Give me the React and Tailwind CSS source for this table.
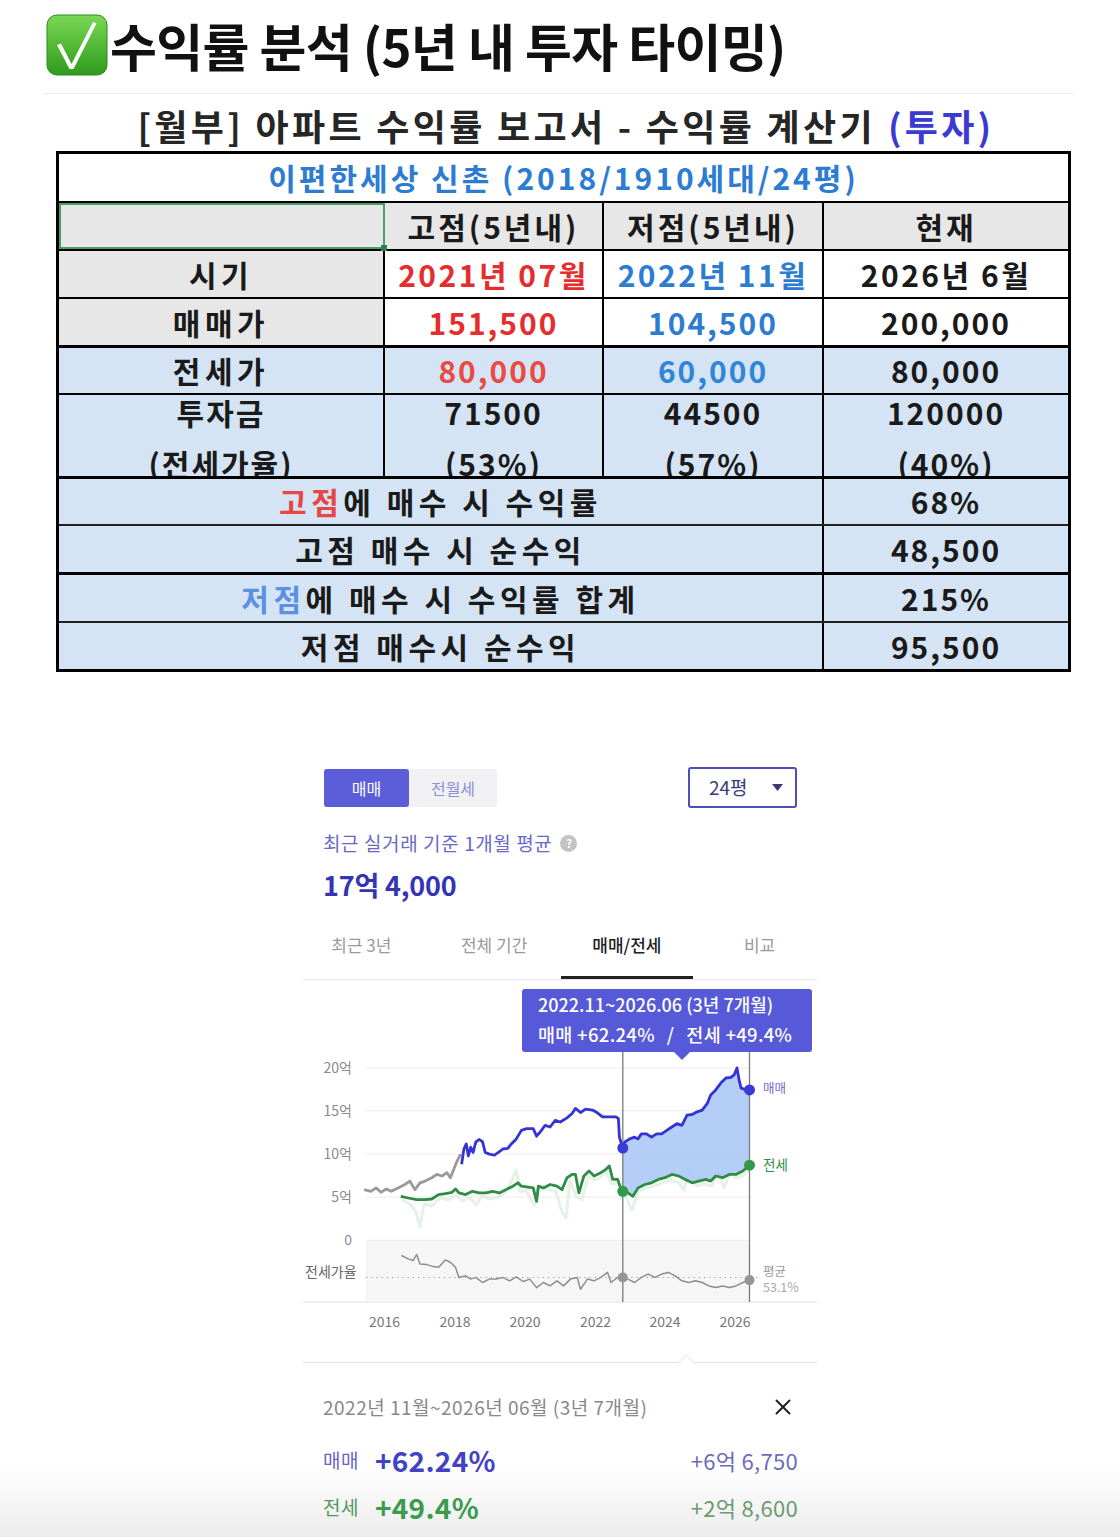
import React from 'react';
import { X } from 'lucide-react';

const GRAY_LINE =
  '364.2,1189.6 371,1191.3 376,1187.9 381.1,1192.3 386.2,1188.9 391.3,1191.3 398,1187.9 404.8,1184.5 409.9,1181.1 414.9,1189.6 420,1182.8 425.1,1181.1 431.8,1177.7 436.9,1174.4 442,1176 447,1172.7 450.4,1177.7 453.8,1169.3 457.2,1160.8 460.6,1154.1';

const BLUE_BEFORE =
  '461.6,1164.2 463.9,1149 466.3,1143.9 468.3,1155.8 470.7,1147.3 473.1,1152.4 475.8,1142.2 479.1,1139.5 482.5,1141.6 485.2,1152.4 489.3,1154.1 494.4,1155.1 499.4,1151.7 502.8,1149 507.9,1148.3 511.3,1143.9 516.3,1138.9 521.4,1130.4 526.5,1128.7 533.2,1128.7 536.6,1136.2 540.7,1131.4 545.1,1125.3 550.1,1127 555.2,1120.3 560.3,1122 567,1117.9 572.1,1113.5 575.5,1108.4 580.5,1112.5 585.6,1109.1 592.4,1110.1 597.4,1112.8 602.5,1116.9 616,1116.9 618.4,1118.6 619.4,1137.2 622.8,1148';

const BLUE_AFTER =
  '622.8,1148 624.5,1142.2 629.6,1138.9 634.6,1137.2 638,1138.9 641.4,1133.8 646.5,1133.8 651.5,1137.2 656.6,1133.8 661.7,1133.8 666.7,1130.4 671.8,1127 676.9,1123.7 681.9,1125.3 687,1115.2 692.1,1114.5 697.2,1111.8 702.2,1110.1 707.3,1103.4 710.7,1094.9 715.7,1089.9 720.8,1083.1 725.9,1078 731,1077.3 734.3,1074.6 737,1067.9 739.4,1081.4 741.1,1088.2 746.2,1089.9 749.5,1089.9';

const GREEN_BEFORE =
  '400.7,1196.3 408.2,1198 416.6,1199.7 425.1,1199.7 431.8,1199 438.6,1194.6 445.3,1193.6 452.1,1192.3 455.5,1188.9 458.9,1192.9 465.6,1194.6 472.4,1191.3 479.1,1192.9 485.9,1192.9 492.7,1191.3 499.4,1192.9 506.2,1189.6 512.9,1186.2 518,1182.8 521.4,1186.2 526.5,1186.9 533.2,1187.9 536.6,1201.4 538.3,1186.2 543.4,1187.9 550.1,1184.5 556.9,1186.2 562,1189.6 567,1177.7 572.1,1174.4 575.5,1174.4 578.9,1192.9 583.9,1176 589,1171 594.1,1176 600.8,1172.7 605.9,1169.3 609.3,1165.9 612.7,1179.4 617.7,1179.4 621.1,1189.6 622.8,1191.3';

const GREEN_AFTER =
  '622.8,1191.3 627.9,1192.9 632.9,1196.3 638,1187.9 644.8,1184.5 651.5,1182.8 658.3,1179.4 665,1177.7 671.8,1174.4 678.6,1176 685.3,1179.4 692.1,1182.8 698.8,1181.1 705.6,1179.4 710.7,1181.1 715.7,1176 722.5,1177.7 729.3,1174.4 736,1174.4 742.8,1171 749.5,1165.2';

const GREEN_NOISE =
  '402,1200 410,1204 416,1212 420,1227 424,1204 432,1206 440,1198 448,1200 456,1195 462,1201 470,1198 476,1205 482,1196 490,1199 498,1197 506,1192 512,1180 516,1170 520,1192 526,1190 534,1206 540,1190 548,1189 556,1192 562,1212 566,1218 570,1180 576,1196 582,1200 588,1176 594,1180 600,1178 606,1172 612,1184 618,1183 626,1197 632,1210 638,1192 646,1188 654,1186 662,1183 670,1180 678,1182 684,1190 690,1168 696,1186 704,1184 712,1186 718,1172 724,1188 730,1172 736,1178 742,1176 749,1170';

const RATIO_LINE =
  '401.4,1255.5 408.2,1258.9 413.2,1260.5 416.6,1254.5 420,1263.9 426.8,1264.6 433.5,1266.6 438.6,1267.3 445.3,1259.9 450.4,1262.2 455.5,1267.3 458.9,1277.4 465.6,1275.8 470.7,1279.1 475.8,1277.4 482.5,1282.5 489.3,1279.1 496,1279.1 502.8,1277.4 509.6,1280.8 516.3,1276.8 523.1,1281.5 529.8,1279.1 536.6,1287.6 543.4,1282.5 550.1,1285.9 556.9,1280.8 563.6,1285.9 570.4,1279.1 577.2,1277.4 580.5,1289.3 587.3,1279.1 594.1,1280.8 600.8,1277.4 607.6,1272.4 611,1282.5 617.7,1277.4 622.8,1277.4 627.9,1279.1 634.6,1282.5 641.4,1277.4 648.1,1274.1 654.9,1277.4 661.7,1274.1 668.4,1272.4 675.2,1275.8 681.9,1280.8 688.7,1282.5 695.5,1280.8 702.2,1282.5 709,1285.9 715.7,1287.6 722.5,1285.9 729.3,1287.6 736,1285.9 742.8,1282.5 749.5,1280.1';

const SHADE = BLUE_AFTER + ' ' + GREEN_AFTER.split(' ').reverse().join(' ');

function CheckEmoji() {
    return (
        <svg width="62" height="62" viewBox="0 0 62 62">
            <defs>
                <linearGradient id="chk" x1="0" y1="0" x2="0" y2="1">
                    <stop offset="0" stopColor="#7ad853" />
                    <stop offset="1" stopColor="#2f9b1d" />
                </linearGradient>
            </defs>
            <rect x="1" y="1" width="60" height="60" rx="10" fill="url(#chk)" stroke="#2a8a1a" strokeWidth="1" />
            <path d="M11 31 L15 29.5 L25.5 50 L47 8 L50.5 9.5 L27.5 55 L23.5 55 Z" fill="#fff" />
        </svg>
    );
}

function Heading() {
    return (
        <div className="h-[93px] flex items-start pl-[46px] pt-[14px]">
            <CheckEmoji />
            <h1 className="ml-[2px] mt-[2px] text-[51px] leading-[58px] font-bold text-[#111] tracking-[-0.7px]">
                수익률 분석 (5년 내 투자 타이밍)
            </h1>
        </div>
    );
}

const COLS = 'grid grid-cols-[326px_219px_220px_1fr]';
const NUM = 'tracking-[2px]';

function ReportSheet() {
    return (
        <div className="ml-[44px] w-[1030px] border-t border-[#ececec]">
            <div className="h-[57px] flex items-center justify-center pl-[14px] pt-[5px] text-[36px] font-bold tracking-[3.3px] text-[#262626]">
                <span>[월부] 아파트 수익률 보고서 - 수익률 계산기</span>
                <span className="ml-[12px] text-[#3b3bd2]">(투자)</span>
            </div>

            <div className="ml-[12px] w-[1015px] border-[3px] border-black text-[30px] font-bold tracking-[4.5px] text-[#1a1a1a]">
                <div className="h-[49px] border-b-2 border-black flex items-center justify-center text-[#2c7cd1] tracking-[3px]">
                    이편한세상 신촌 (2018/1910세대/24평)
                </div>

                <div className={`${COLS} h-[48px] border-b-2 border-black bg-[#e7e7e7] tracking-[3px]`}>
                    <div className="relative border-2 border-[#4a9d68]">
                        <span className="absolute -right-[4px] -bottom-[4px] w-[6px] h-[6px] bg-[#2f7d4a]" />
                    </div>
                    <div className="flex items-center justify-center border-r-2 border-black">고점(5년내)</div>
                    <div className="flex items-center justify-center border-r-2 border-black">저점(5년내)</div>
                    <div className="flex items-center justify-center">현재</div>
                </div>

                <div className={`${COLS} h-[48px] border-b-2 border-black`}>
                    <div className="flex items-center justify-center bg-[#e7e7e7] border-r-2 border-black">시기</div>
                    <div className="flex items-center justify-center border-r-2 border-black text-[#e52d2d] tracking-[2.5px]">2021년 07월</div>
                    <div className="flex items-center justify-center border-r-2 border-black text-[#2c7cd1] tracking-[2.5px]">2022년 11월</div>
                    <div className="flex items-center justify-center tracking-[2.5px]">2026년 6월</div>
                </div>

                <div className={`${COLS} h-[49px] border-b-[3px] border-black`}>
                    <div className="flex items-center justify-center bg-[#e7e7e7] border-r-2 border-black">매매가</div>
                    <div className={`flex items-center justify-center border-r-2 border-black text-[#e52d2d] ${NUM}`}>151,500</div>
                    <div className={`flex items-center justify-center border-r-2 border-black text-[#2c7cd1] ${NUM}`}>104,500</div>
                    <div className={`flex items-center justify-center ${NUM}`}>200,000</div>
                </div>

                <div className="bg-[#d5e4f4]">
                    <div className={`${COLS} h-[47px] border-b-2 border-black`}>
                        <div className="flex items-center justify-center border-r-2 border-black">전세가</div>
                        <div className={`flex items-center justify-center border-r-2 border-black text-[#ea4a42] ${NUM}`}>80,000</div>
                        <div className={`flex items-center justify-center border-r-2 border-black text-[#2f86d6] ${NUM}`}>60,000</div>
                        <div className={`flex items-center justify-center ${NUM}`}>80,000</div>
                    </div>

                    <div className={`${COLS} h-[84px] border-b-[3px] border-black leading-[32px]`}>
                        {[
                            ['투자금', '(전세가율)'],
                            ['71500', '(53%)'],
                            ['44500', '(57%)'],
                            ['120000', '(40%)'],
                        ].map(([top, bottom], i) => (
                            <div
                                key={top}
                                className={`flex flex-col items-center overflow-hidden ${i < 3 ? 'border-r-2 border-black' : ''} ${NUM}`}
                            >
                                <span className="mt-[1px]">{top}</span>
                                <span className="mt-[19px]">{bottom}</span>
                            </div>
                        ))}
                    </div>

                    <div className="grid grid-cols-[765px_1fr] h-[47px] border-b-2 border-[#222]">
                        <div className="flex items-center justify-center border-r-2 border-black">
                            <span className="text-[#e84545]">고점</span>에 매수 시 수익률
                        </div>
                        <div className={`flex items-center justify-center ${NUM}`}>68%</div>
                    </div>

                    <div className="grid grid-cols-[765px_1fr] h-[49px] border-b-[3px] border-black">
                        <div className="flex items-center justify-center border-r-2 border-black">고점 매수 시 순수익</div>
                        <div className={`flex items-center justify-center ${NUM}`}>48,500</div>
                    </div>

                    <div className="grid grid-cols-[765px_1fr] h-[48px] border-b-2 border-[#222]">
                        <div className="flex items-center justify-center border-r-2 border-black">
                            <span className="text-[#5c90e2]">저점</span>에 매수 시 수익률 합계
                        </div>
                        <div className={`flex items-center justify-center ${NUM}`}>215%</div>
                    </div>

                    <div className="grid grid-cols-[765px_1fr] h-[46px]">
                        <div className="flex items-center justify-center border-r-2 border-black">저점 매수시 순수익</div>
                        <div className={`flex items-center justify-center ${NUM}`}>95,500</div>
                    </div>
                </div>
            </div>
        </div>
    );
}

function TrendChart() {
    const font = '"Noto Sans CJK KR", "Noto Sans", sans-serif';
    const grid = [1068, 1110.8, 1154.1, 1197, 1240.3];
    const yLabels = ['20억', '15억', '10억', '5억', '0'];
    const years = [
        [384.5, '2016'],
        [455, '2018'],
        [525, '2020'],
        [595.5, '2022'],
        [665, '2024'],
        [735, '2026'],
    ];

    return (
        <svg width="514" height="288" viewBox="303 1052 514 288" fontFamily={font} className="block">
            {grid.map((y) => (
                <line key={y} x1="366" y1={y} x2="750" y2={y} stroke="#ececec" strokeWidth="1" />
            ))}
            {grid.map((y, i) => (
                <text key={'l' + y} x="352" y={y + 5} fontSize="14" fill="#8a8a8a" textAnchor="end">
                    {yLabels[i]}
                </text>
            ))}

            <rect x="366" y="1241" width="384" height="60" fill="#f6f6f6" />
            <line x1="366" y1="1277.5" x2="758" y2="1277.5" stroke="#999" strokeWidth="1.2" strokeDasharray="1.2 4" />
            <text x="305" y="1277" fontSize="14" fill="#666">전세가율</text>

            <polyline points={GREEN_NOISE} fill="none" stroke="#d3ead7" strokeWidth="3" strokeLinejoin="round" opacity="0.6" />
            <polygon points={SHADE} fill="#a7c6f7" opacity="0.85" />

            <polyline points={GRAY_LINE} fill="none" stroke="#9a9a9a" strokeWidth="2.8" strokeLinejoin="round" />
            <polyline points={BLUE_BEFORE} fill="none" stroke="#3434d6" strokeWidth="2.8" strokeLinejoin="round" />
            <polyline points={BLUE_AFTER} fill="none" stroke="#3434d6" strokeWidth="2.8" strokeLinejoin="round" />
            <polyline points={GREEN_BEFORE} fill="none" stroke="#2f8c45" strokeWidth="2.8" strokeLinejoin="round" />
            <polyline points={GREEN_AFTER} fill="none" stroke="#2f8c45" strokeWidth="2.8" strokeLinejoin="round" />
            <polyline points={RATIO_LINE} fill="none" stroke="#8e8e8e" strokeWidth="1.5" strokeLinejoin="round" />

            <line x1="303" y1="1302" x2="817" y2="1302" stroke="#e2e2e2" strokeWidth="1" />
            <line x1="622.8" y1="1052" x2="622.8" y2="1302" stroke="#7a7a7a" strokeWidth="1.3" />
            <line x1="749.5" y1="1052" x2="749.5" y2="1302" stroke="#7a7a7a" strokeWidth="1.3" />

            <circle cx="622.8" cy="1148" r="5.5" fill="#3a3ad8" />
            <circle cx="749.5" cy="1089.9" r="5.5" fill="#3a3ad8" />
            <circle cx="622.8" cy="1191.3" r="5.5" fill="#2f9a4a" />
            <circle cx="749.5" cy="1165.2" r="5.5" fill="#2f9a4a" />
            <circle cx="622.8" cy="1277.4" r="5" fill="#959595" />
            <circle cx="749.5" cy="1280.1" r="5" fill="#959595" />

            <text x="763" y="1093" fontSize="12.5" fill="#7568d8">매매</text>
            <text x="763" y="1169.5" fontSize="13.5" fill="#2f8c45">전세</text>
            <text x="763" y="1276" fontSize="12.5" fill="#9a9a9a">평균</text>
            <text x="763" y="1292" fontSize="12.5" fill="#a8a8a8">53.1%</text>

            {years.map(([x, label]) => (
                <text key={label} x={x} y="1327" fontSize="14" fill="#777" textAnchor="middle">
                    {label}
                </text>
            ))}
        </svg>
    );
}

function PriceChartPanel() {
    const tabs = ['최근 3년', '전체 기간', '매매/전세', '비교'];

    return (
        <div className="relative ml-[303px] w-[514px] mt-[95px]">
            <div className="flex items-center justify-between pl-[21px] pr-[20px]">
                <div className="flex h-[38px] bg-[#f1f1f3] rounded-[3px] text-[16px]">
                    <div className="w-[85px] flex items-center justify-center bg-[#5b5ed8] rounded-[3px] text-white">매매</div>
                    <div className="w-[88px] flex items-center justify-center text-[#8d8dd6]">전월세</div>
                </div>
                <div className="w-[109px] h-[41px] flex items-center justify-between pl-[19px] pr-[12px] border-2 border-[#4b4fb6] rounded-[3px] text-[19px] text-[#3a3a78]">
                    <span>24평</span>
                    <svg width="11" height="7" viewBox="0 0 11 7">
                        <path d="M0 0 H11 L5.5 7 Z" fill="#3a3a78" />
                    </svg>
                </div>
            </div>

            <div className="mt-[22px] pl-[20px] flex items-center text-[19px] leading-[26px] tracking-[0.6px] text-[#6868c8]">
                <span>최근 실거래 기준 1개월 평균</span>
                <span className="ml-[8px] w-[17px] h-[17px] rounded-full bg-[#c3c3c3] text-white text-[11px] leading-[17px] text-center font-bold tracking-normal">?</span>
            </div>

            <div className="mt-[11px] pl-[20px] text-[27px] leading-[36px] font-bold tracking-[-0.2px] text-[#3434b5]">17억 4,000</div>

            <div className="mt-[10px] border-b border-[#e6e6e6]">
                <div className="-ml-[8px] w-[531px] grid grid-cols-4 text-[17px]">
                    {tabs.map((t) => (
                        <div
                            key={t}
                            className={`h-[66px] flex items-center justify-center ${
                                t === '매매/전세'
                                    ? 'border-b-[3px] border-[#222] text-[#222] font-medium'
                                    : 'border-b-[3px] border-transparent text-[#9a9a9a]'
                            }`}
                        >
                            {t}
                        </div>
                    ))}
                </div>
            </div>

            <div className="relative mt-[9px] ml-[219px] w-[290px] h-[63px] bg-[#5659d8] rounded-[3px] pl-[16px] text-white leading-[30px] font-medium whitespace-nowrap">
                <div className="text-[18px]">2022.11~2026.06 (3년 7개월)</div>
                <div className="text-[18.5px] tracking-[0.3px]">
                    매매 +62.24%<span className="inline-block mx-[12px]">/</span>전세 +49.4%
                </div>
                <svg className="absolute left-[152px] -bottom-[8px]" width="16" height="8" viewBox="0 0 16 8">
                    <path d="M0 0 H16 L8 8 Z" fill="#5659d8" />
                </svg>
            </div>

            <TrendChart />

            <div className="relative mt-[22px] border-t border-[#e4e4e4]">
                <svg className="absolute left-[374px] -top-[8px]" width="18" height="9" viewBox="0 0 18 9">
                    <path d="M0 8.5 L9 0.5 L18 8.5" fill="#fff" stroke="#e0e0e0" strokeWidth="1" />
                </svg>
            </div>

            <div className="mt-[31px] flex items-center justify-between pl-[20px] pr-[21px] text-[19px] leading-[26px] tracking-[0.5px] text-[#888]">
                <span>2022년 11월~2026년 06월 (3년 7개월)</span>
                <X size={26} strokeWidth={1.8} color="#222" />
            </div>

            <div className="mt-[22px] h-[36px] flex items-center justify-between pl-[20px] pr-[19px]">
                <div className="flex items-center">
                    <span className="text-[19px] tracking-[0.5px] text-[#6565c8]">매매</span>
                    <span className="ml-[16px] text-[28px] font-bold tracking-[0.3px] text-[#4242c4]">+62.24%</span>
                </div>
                <span className="text-[22px] tracking-[0.3px] text-[#6c6cba]">+6억 6,750</span>
            </div>

            <div className="mt-[11px] h-[36px] flex items-center justify-between pl-[20px] pr-[19px]">
                <div className="flex items-center">
                    <span className="text-[19px] tracking-[0.5px] text-[#4e9a5e]">전세</span>
                    <span className="ml-[16px] text-[28px] font-bold tracking-[0.3px] text-[#3a9a4e]">+49.4%</span>
                </div>
                <span className="text-[22px] tracking-[0.3px] text-[#6c9a72]">+2억 8,600</span>
            </div>
        </div>
    );
}

export default function App() {
    return (
        <div className="relative w-[1120px] h-[1537px] overflow-hidden bg-white font-['Noto_Sans_CJK_KR','Noto_Sans',sans-serif] text-[#111]">
            <div className="pointer-events-none absolute left-0 right-0 bottom-0 h-[70px] bg-linear-to-b from-white/0 to-[#ececec]" />
            <div className="relative">
                <Heading />
                <ReportSheet />
                <PriceChartPanel />
            </div>
        </div>
    );
}
